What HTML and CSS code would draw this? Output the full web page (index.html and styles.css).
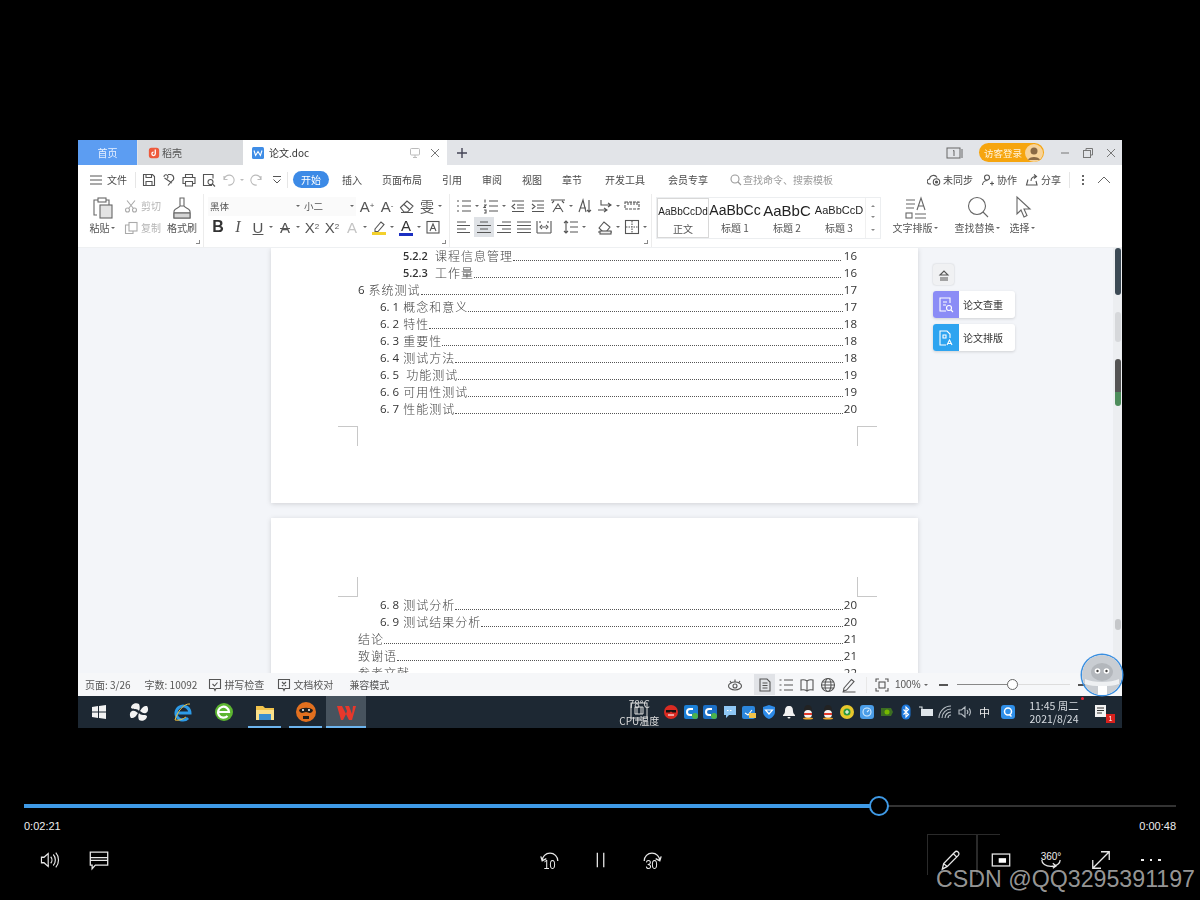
FILE: index.html
```html
<!DOCTYPE html>
<html lang="zh">
<head>
<meta charset="utf-8">
<title>论文.doc</title>
<link rel="stylesheet" href="styles.css">
</head>
<body>
<main class="stage">
  <section class="window">
    <header class="tabbar">
      <div class="tab tab-home">首页</div>
      <div class="tab tab-shell">
        <svg class="logo12" viewBox="0 0 14 14"><rect x="1" y="1" width="12" height="12" rx="3" fill="#ee5a3c"/><path d="M8.5 3v5a2 2 0 1 1-2-2" fill="none" stroke="#fff" stroke-width="1.5"/></svg>
        <span>稻壳</span>
      </div>
      <div class="tab tab-doc">
        <svg class="logo14" viewBox="0 0 14 14"><rect x="1" y="1" width="12" height="12" rx="1.5" fill="#3f8de6"/><path d="M3 4.5l1.6 5L7 5.5l2.4 4L11 4.500" fill="none" stroke="#fff" stroke-width="1.1"/></svg>
        <span class="doc-name">论文.doc</span>
        <svg class="wm12 monitor" viewBox="0 0 12 12"><rect x="1.500" y="1.500" width="9" height="6.500" rx="1"/><path d="M6 8v2.500M4 10.500h4"/></svg>
        <svg class="wm12" viewBox="0 0 12 12"><path d="M2 2l8 8M10 2l-8 8"/></svg>
      </div>
      <div class="tab-plus">
        <svg class="plus" viewBox="0 0 12 12"><path d="M6 1v10M1 6h10"/></svg>
      </div>
      <div class="tab-right">
        <svg class="book" viewBox="0 0 18 12"><rect x="1" y="1" width="13" height="10"/><path d="M7 4l1-.6V9M16 2v9"/></svg>
        <div class="login"><span>访客登录</span>
          <svg class="avatar" viewBox="0 0 18 18"><circle cx="9" cy="9" r="9" fill="#f7d39a"/><circle cx="9" cy="7" r="3.500" fill="#8a6a45"/><path d="M3 16c1-4 11-4 12 0z" fill="#8a6a45"/></svg>
        </div>
        <svg class="wm12 win" viewBox="0 0 12 12"><path d="M2 6h8"/></svg>
        <svg class="wm12 win" viewBox="0 0 12 12"><rect x="1.500" y="3.500" width="7" height="7"/><path d="M4 3.500V1.500h6.500V8H8.500"/></svg>
        <svg class="wm12 win" viewBox="0 0 12 12"><path d="M2 2l8 8M10 2l-8 8"/></svg>
      </div>
    </header>

    <nav class="menubar">
      <svg class="burger" viewBox="0 0 12 10"><path d="M0 1h12M0 5h12M0 9h12"/></svg>
      <span class="file-label">文件</span>
      <i class="menu-sep"></i>
      <div class="quick">
        <span class="tb"><svg class="ic" viewBox="0 0 20 20"><path d="M5 4.500h8.500l2 2V15.500H4.500V4.500zM7 4.500v3h5.500v-3M7 15.500v-4h6v4"/></svg></span>
        <span class="tb"><svg class="ic" viewBox="0 0 20 20"><path d="M5 7a2 2 0 1 1 3 1.500M5.500 8L13 13M11 4.500a3.500 3.500 0 0 1 2 6.500l-4 4.500M9 4.500h3"/></svg></span>
        <span class="tb"><svg class="ic" viewBox="0 0 20 20"><path d="M6.500 7.500V4.500h7v3M6.500 13.500H4v-6h12v6h-2.500M6.500 11.500h7v4.500h-7z"/></svg></span>
        <span class="tb"><svg class="ic" viewBox="0 0 20 20"><path d="M13 15.500H4.500v-11h9.500v4M9 12a2.500 2.500 0 1 0 5 0a2.500 2.500 0 0 0-5 0M13.500 14l2.500 2.500"/></svg></span>
        <span class="tb dim"><svg class="ic" viewBox="0 0 20 20"><path d="M5 6v3.500h3.500M5.200 9.300a5 5 0 1 1 4 5.700"/></svg></span><i class="caret dimc"></i>
        <span class="tb dim"><svg class="ic" viewBox="0 0 20 20"><path d="M15 6v3.500h-3.500M14.800 9.300a5 5 0 1 0-4 5.700"/></svg></span>
        <span class="tb small"><svg class="ic" viewBox="0 0 20 20"><path d="M6 6.500h8M6.500 9.500l3.500 3.500 3.500-3.500"/></svg></span>
      </div>
      <i class="menu-sep"></i>
      <div class="menu-tabs">
        <span class="pill">开始</span>
        <span>插入</span>
        <span>页面布局</span>
        <span>引用</span>
        <span>审阅</span>
        <span>视图</span>
        <span>章节</span>
        <span class="mt-wide">开发工具</span>
        <span class="mt-wide">会员专享</span>
      </div>
      <div class="search">
        <svg class="ic12" viewBox="0 0 12 12"><circle cx="5" cy="5" r="4"/><path d="M8 8l3 3"/></svg>
        <span>查找命令、搜索模板</span>
      </div>
      <div class="menu-right">
        <span class="mr-item"><svg class="ic14" viewBox="0 0 14 14"><path d="M4 11H3a2.500 2.500 0 0 1-.5-5A4 4 0 0 1 10 4.500"/><circle cx="9.500" cy="9" r="3.200"/><circle cx="9.500" cy="9" r="1" fill="#555"/></svg>未同步</span>
        <span class="mr-item"><svg class="ic14" viewBox="0 0 14 14"><circle cx="6" cy="4.500" r="2.500"/><path d="M1.500 12c0-3 2.500-4.500 5-4.500M9 10.500h4M11 8.500v4"/></svg>协作</span>
        <span class="mr-item"><svg class="ic14" viewBox="0 0 14 14"><path d="M3 6.500L1.500 12h10.500L11 8M6 8c0-3 2-4.500 5-4.500M9 1.500l2.500 2L9 5.500"/></svg>分享</span>
        <i class="menu-sep"></i>
        <span class="vdots"><i></i><i></i><i></i></span>
        <svg class="chev" viewBox="0 0 14 8"><path d="M1 7l6-6 6 6"/></svg>
      </div>
    </nav>

    <section class="ribbon">
      <div class="rg rg-clip">
        <div class="bigbtn paste">
          <svg class="ic26" viewBox="0 0 26 26"><path d="M7 20H4V5h4M16 5h3v5"/><rect x="8" y="3" width="8" height="4"/><rect x="10" y="10" width="12" height="13" fill="#e3e3e3"/></svg>
          <span class="lab">粘贴<i class="caret"></i></span>
        </div>
        <div class="cutcol">
          <span class="dimline"><svg class="ic14" viewBox="0 0 14 14"><circle cx="3.500" cy="11" r="2"/><circle cx="10.500" cy="11" r="2"/><path d="M4.500 9.500L11 1.500M9.500 9.500L3 1.500"/></svg><b>剪切</b></span>
          <span class="dimline"><svg class="ic14" viewBox="0 0 14 14"><rect x="5" y="1.500" width="8" height="8.500"/><path d="M5 4H1.500v8.500H9V10"/></svg><b>复制</b></span>
        </div>
        <div class="bigbtn brush">
          <svg class="ic26" viewBox="0 0 26 26"><path d="M11 3h4v8h-4zM11 11c-1 2-5 2-6 5v7h16v-7c-1-3-5-3-6-5M5 18h16"/><rect x="5" y="18" width="16" height="5" fill="#d5d5d5"/></svg>
          <span class="lab">格式刷</span>
        </div>
        <i class="launch"></i>
      </div>

      <div class="rg rg-font">
        <div class="rrow">
          <div class="select font-sel"><span>黑体</span><i class="caret"></i></div>
          <div class="select size-sel"><span>小二</span><i class="caret"></i></div>
          <span class="tb txt grow1">A<sup>+</sup></span>
          <span class="tb txt">A<sup>-</sup></span>
          <span class="tb"><svg class="ic" viewBox="0 0 20 20"><path d="M3.500 11.500l6.500-6.500 6 5-5.500 6H7zM6.500 8l6 5.500M4 16.500h12"/></svg></span>
          <span class="tb txt serifish">雯</span><i class="caret"></i>
        </div>
        <div class="rrow">
          <span class="tb txt bold">B</span>
          <span class="tb txt ital">I</span>
          <span class="tb txt under">U</span><i class="caret"></i>
          <span class="tb txt strike">A</span><i class="caret"></i>
          <span class="tb txt">X<sup>2</sup></span>
          <span class="tb txt">X<sub>2</sub></span>
          <span class="tb txt ghost">A</span><i class="caret"></i>
          <span class="tb"><svg class="ic" viewBox="0 0 20 20"><path d="M6 12l6-7 3 2.500-6 7H6z"/><rect x="3" y="15" width="14" height="3" fill="#f3d02c" stroke="none"/></svg></span><i class="caret"></i>
          <span class="tb txt fontcolor">A</span><i class="caret"></i>
          <span class="tb"><svg class="ic" viewBox="0 0 20 20"><rect x="4" y="4.500" width="12" height="11.500"/><path d="M7 14l3-7 3 7M8 11.500h4"/></svg></span>
        </div>
        <i class="launch"></i>
      </div>

      <div class="rg rg-para">
        <div class="rrow">
          <span class="tb"><svg class="ic" viewBox="0 0 20 20"><path d="M8 5h9M8 10h9M8 15h9M3 5h2M3 10h2M3 15h2"/></svg></span><i class="caret"></i>
          <span class="tb"><svg class="ic" viewBox="0 0 20 20"><path d="M8 5h9M8 10h9M8 15h9M4 3.500v3M3 9h2l-2 2.500h2M3 14h2v3H3"/></svg></span><i class="caret"></i>
          <span class="tb"><svg class="ic" viewBox="0 0 20 20"><path d="M4 5h12M9 9h7M9 12h7M4 15.500h12M7 8l-3 2.500L7 13"/></svg></span>
          <span class="tb"><svg class="ic" viewBox="0 0 20 20"><path d="M4 5h12M9 9h7M9 12h7M4 15.500h12M4 8l3 2.500L4 13"/></svg></span>
          <span class="tb"><svg class="ic" viewBox="0 0 20 20"><path d="M3 4h14M5 16l5-8 5 8M7 12.500h6M4 7l2-2M16 7l-2-2"/></svg></span><i class="caret"></i>
          <span class="tb"><svg class="ic" viewBox="0 0 20 20"><path d="M4 16l4-12 3 12M5 12h6M14 4v12M12 14l2 2 2-2"/></svg></span>
          <span class="tb"><svg class="ic" viewBox="0 0 20 20"><path d="M6 4v5h10M13 7l3 2-3 2M3 14h9M9 12l3 2-3 2"/></svg></span><i class="caret"></i>
          <span class="tb"><svg class="ic" viewBox="0 0 20 20"><path d="M3 6h14v7H3zM6 6v3M9 6v3M12 6v3M15 6v3" stroke-dasharray="3 1"/></svg></span>
        </div>
        <div class="rrow">
          <span class="tb"><svg class="ic" viewBox="0 0 20 20"><path d="M3 5h9M3 8.500h13M3 12h9M3 15.500h13"/></svg></span>
          <span class="tb on"><svg class="ic" viewBox="0 0 20 20"><path d="M6 5h8M3 8.500h14M6 12h8M3 15.500h14"/></svg></span>
          <span class="tb"><svg class="ic" viewBox="0 0 20 20"><path d="M8 5h9M3 8.500h14M8 12h9M3 15.500h14"/></svg></span>
          <span class="tb"><svg class="ic" viewBox="0 0 20 20"><path d="M3 5h14M3 8.500h14M3 12h14M3 15.500h14"/></svg></span>
          <span class="tb"><svg class="ic" viewBox="0 0 20 20"><path d="M3 16h14M3 4v12M17 4v12M6 4v2M14 4v2M8 10h4M8 8l-2 2 2 2M12 8l2 2-2 2"/></svg></span>
          <i class="gap-line"></i>
          <span class="tb"><svg class="ic" viewBox="0 0 20 20"><path d="M9 5h8M9 10h8M9 15h8M5 4v12M3 6l2-2 2 2M3 14l2 2 2-2"/></svg></span><i class="caret"></i>
          <i class="gap-line"></i>
          <span class="tb"><svg class="ic" viewBox="0 0 20 20"><path d="M4 11l5-6 6 5-4 5H8zM3 15h14"/><rect x="5" y="14" width="11" height="3" fill="#eee"/></svg></span><i class="caret"></i>
          <span class="tb"><svg class="ic" viewBox="0 0 20 20"><rect x="3.500" y="3.500" width="13" height="13"/><path d="M10 4v12M4 10h12" stroke-dasharray="1.500 1"/></svg></span><i class="caret"></i>
        </div>
        <i class="launch"></i>
      </div>

      <div class="gallery">
        <div class="style selected"><span class="pv pv-s">AaBbCcDd</span><span class="lab">正文</span></div>
        <div class="style"><span class="pv pv-h1">AaBbCc</span><span class="lab">标题 1</span></div>
        <div class="style"><span class="pv pv-h2">AaBbC</span><span class="lab">标题 2</span></div>
        <div class="style"><span class="pv pv-h3">AaBbCcD</span><span class="lab">标题 3</span></div>
        <div class="gal-scroll"><i class="up"></i><i class="down"></i><i class="more"></i></div>
      </div>

      <div class="bigbtn layout-btn">
        <svg class="ic26" viewBox="0 0 26 26"><path d="M3 5h9M3 9h9M3 13h8M14 15l4-12 4 12M15.500 11h5M12 19h11M12 23h11"/><rect x="3" y="18" width="6" height="5"/></svg>
        <span class="lab">文字排版<i class="caret"></i></span>
      </div>
      <div class="bigbtn find-btn">
        <svg class="ic26" viewBox="0 0 26 26"><circle cx="12" cy="11" r="8.500"/><path d="M18 17l5 5"/></svg>
        <span class="lab">查找替换<i class="caret"></i></span>
      </div>
      <div class="bigbtn select-btn">
        <svg class="ic26" viewBox="0 0 26 26"><path d="M7 2v17l4-4 3 7 3-1.500-3-6.500h6z"/></svg>
        <span class="lab">选择<i class="caret"></i></span>
      </div>
    </section>

    <section class="docarea">
      <div class="gutter"></div>
      <div class="pages">
        <article class="page page-one">
          <div class="toc l2"><span class="n b">5.2.2</span><span class="t wide">课程信息管理</span><i class="dots"></i><span class="n gapn">16</span></div>
          <div class="toc l2"><span class="n b">5.2.3</span><span class="t wide">工作量</span><i class="dots"></i><span class="n gapn">16</span></div>
          <div class="toc l0"><span class="n">6</span><span class="t">系统测试</span><i class="dots"></i><span class="n">17</span></div>
          <div class="toc l1"><span class="n">6. 1</span><span class="t">概念和意义</span><i class="dots"></i><span class="n">17</span></div>
          <div class="toc l1"><span class="n">6. 2</span><span class="t">特性</span><i class="dots"></i><span class="n">18</span></div>
          <div class="toc l1"><span class="n">6. 3</span><span class="t">重要性</span><i class="dots"></i><span class="n">18</span></div>
          <div class="toc l1"><span class="n">6. 4</span><span class="t">测试方法</span><i class="dots"></i><span class="n">18</span></div>
          <div class="toc l1"><span class="n">6. 5</span><span class="t wide">功能测试</span><i class="dots"></i><span class="n">19</span></div>
          <div class="toc l1"><span class="n">6. 6</span><span class="t">可用性测试</span><i class="dots"></i><span class="n">19</span></div>
          <div class="toc l1"><span class="n">6. 7</span><span class="t">性能测试</span><i class="dots"></i><span class="n">20</span></div>
          <div class="marks marks-bottom"><i class="mark ml"></i><i class="mark mr"></i></div>
        </article>
        <article class="page page-two">
          <div class="marks marks-top"><i class="mark ml"></i><i class="mark mr"></i></div>
          <div class="toc l1"><span class="n">6. 8</span><span class="t">测试分析</span><i class="dots"></i><span class="n">20</span></div>
          <div class="toc l1"><span class="n">6. 9</span><span class="t">测试结果分析</span><i class="dots"></i><span class="n">20</span></div>
          <div class="toc l0"><span class="t">结论</span><i class="dots"></i><span class="n">21</span></div>
          <div class="toc l0"><span class="t">致谢语</span><i class="dots"></i><span class="n">21</span></div>
          <div class="toc l0"><span class="t">参考文献</span><i class="dots"></i><span class="n">22</span></div>
        </article>
      </div>
      <aside class="sidepanel">
        <div class="collapse"><svg class="ic12" viewBox="0 0 12 12"><path d="M2 6l4-4 4 4zM2 9h8M2 11h8"/></svg></div>
        <div class="sidecard">
          <span class="sc-ico purple"><svg class="ic18" viewBox="0 0 18 18"><path d="M13 7V2H3v13h6M6 6h4M6 9h3"/><circle cx="12" cy="12" r="2.500"/><path d="M14 14l2 2"/></svg></span>
          <span>论文查重</span>
        </div>
        <div class="sidecard">
          <span class="sc-ico blue"><svg class="ic18" viewBox="0 0 18 18"><path d="M9 16H3V2h7l3 3v4M6 6h3v3H6z"/><path d="M10 16l2.500-5 2.500 5M11 14.500h3"/></svg></span>
          <span>论文排版</span>
        </div>
      </aside>
      <div class="scrollbar">
        <i class="sb-a"></i><i class="sb-b"></i><i class="sb-thumb"></i><i class="sb-btn"></i>
      </div>
    </section>

    <footer class="statusbar">
      <span class="st first">页面: 3/26</span>
      <span class="st">字数: 10092</span>
      <span class="st chk"><svg class="ic14" viewBox="0 0 14 14"><path d="M1.500 1.500h11v9H8l-1 2-1-2H1.500zM4.500 6l2 2 3-3.500"/></svg>拼写检查</span>
      <span class="st chk"><svg class="ic14" viewBox="0 0 14 14"><path d="M1.500 1.500h11v9H8l-1 2-1-2H1.500zM5 4l4 4M9 4L5 8"/></svg>文档校对</span>
      <span class="st">兼容模式</span>
      <div class="st-right">
        <span class="sv"><svg class="ic16" viewBox="0 0 16 16"><ellipse cx="8" cy="9" rx="6.500" ry="4"/><circle cx="8" cy="9" r="2"/><path d="M3 4l1.500 2M8 2.500V5M13 4l-1.500 2"/></svg></span>
        <i class="st-gap"></i>
        <span class="sv on"><svg class="ic16" viewBox="0 0 16 16"><path d="M3 2h7l3 3v9H3zM5.500 6h5M5.500 8.500h5M5.500 11h5"/></svg></span>
        <span class="sv"><svg class="ic16" viewBox="0 0 16 16"><path d="M1.500 3h2M6 3h9M1.500 8h2M6 8h9M1.500 13h2M6 13h9"/></svg></span>
        <span class="sv"><svg class="ic16" viewBox="0 0 16 16"><path d="M8 4C6 2.500 4 2.500 2 3v10c2-.5 4-.5 6 1 2-1.500 4-1.500 6-1V3c-2-.5-4-.5-6 1zM8 4v10"/></svg></span>
        <span class="sv"><svg class="ic16" viewBox="0 0 16 16"><circle cx="8" cy="8" r="6.500"/><ellipse cx="8" cy="8" rx="3" ry="6.500"/><path d="M1.500 8h13M2.500 5h11M2.500 11h11"/></svg></span>
        <span class="sv"><svg class="ic16" viewBox="0 0 16 16"><path d="M3 11l7.500-8.500 2.500 2L5.500 13 2.500 14zM1.500 15h13"/></svg></span>
        <i class="st-line"></i>
        <span class="sv"><svg class="ic16" viewBox="0 0 16 16"><path d="M2 5V2h3M11 2h3v3M14 11v3h-3M5 14H2v-3"/><rect x="5" y="5" width="6" height="6"/></svg></span>
        <span class="zoomv">100%<i class="caret"></i></span>
        <i class="minus"></i>
        <div class="slider"><i class="knob"></i></div>
        <i class="plusmark"></i>
      </div>
    </footer>

    <footer class="taskbar">
      <div class="apps">
        <span class="app"><svg class="ic16" viewBox="0 0 16 16"><path class="solid-w" d="M1 3l6-1v5.500H1zM8 2l7-1v6.500H8zM1 8.500h6V14l-6-1zM8 8.500h7V15l-7-1z"/></svg></span>
        <span class="app"><svg class="ic22" viewBox="0 0 22 22"><path class="solid-w" d="M11 10C9 7 6 9 3 7c0-4 5-6 8-4 1 2 1 5 0 7zM12 10c2-3 3-5 7-5 2 3 1 6-1 7-3 1-4-1-6-2zM11 12c2 3 6 1 8 3 0 4-5 6-8 4-1-2-1-5 0-7zM10 12c-2 3-3 5-7 5-2-3-1-6 1-7 3-1 4 1 6 2z"/></svg></span>
        <span class="app"><svg class="ic22" viewBox="0 0 22 22"><path d="M3 12h15a7 7 0 1 0-2 5" fill="none" stroke="#2d9be8" stroke-width="3"/><path d="M18 3c-6-1-13 8-15 16 4 1 8-1 11-3" fill="none" stroke="#f2c13c" stroke-width="1"/></svg></span>
        <span class="app"><svg class="ic22" viewBox="0 0 22 22"><circle cx="11" cy="11" r="9" fill="#5cb531"/><path d="M5 11h11a5.500 5.500 0 1 0-1.500 4" fill="none" stroke="#fff" stroke-width="2.200"/></svg></span>
        <span class="app run"><svg class="ic22" viewBox="0 0 22 22"><path d="M2 5h7l2 2h9v12H2z" fill="#f1c34c"/><path d="M2 9h18v10H2z" fill="#fbe08a"/><rect x="5" y="13" width="12" height="6" fill="#3a8ed0"/></svg></span>
        <span class="app run"><svg class="ic22" viewBox="0 0 22 22"><circle cx="11" cy="11" r="10" fill="#e2701f"/><path d="M4 9c3-3 11-3 14 0-1 4-4 3-7 2-3 1-6 2-7-2z" fill="#1d1d1d"/><circle cx="8" cy="9" r="1" fill="#fff"/><circle cx="14" cy="9" r="1" fill="#fff"/><path d="M8 15h6v3H8z" fill="#1d1d1d"/></svg></span>
        <span class="app active"><svg class="ic22" viewBox="0 0 22 22"><path d="M2 5h5l4 8 1-3-2-5h4l3 8 1-8h3l-4 14h-3l-3-6-3 6H6z" fill="#e8382b"/></svg></span>
      </div>
      <div class="tray">
        <div class="temp"><span class="tmp1">78°C</span><svg class="tmp-ic" viewBox="0 0 22 22"><rect x="3" y="2" width="16" height="15"/><path d="M7 6h8v7H7zM7 19h8M9 6v7M13 6v7"/></svg><span class="tmp2">CPU温度</span></div>
        <span class="ti"><svg class="ic16" viewBox="0 0 16 16"><circle cx="8" cy="8" r="7" fill="#d92b22"/><path d="M3 6h10v2.500H9.500L8 7.500 6.500 8.500H3z" fill="#111"/><path d="M5 11h6" stroke="#fff"/></svg></span>
        <span class="ti"><svg class="ic16" viewBox="0 0 16 16"><rect x="1" y="1" width="14" height="14" rx="2" fill="#1b7fd6"/><path d="M10 5H7a3 3 0 0 0 0 6h2" stroke="#fff" stroke-width="2" fill="none"/><circle cx="12" cy="12" r="3" fill="#4cb24c"/></svg></span>
        <span class="ti"><svg class="ic16" viewBox="0 0 16 16"><rect x="1" y="1" width="14" height="14" rx="2" fill="#1b6fc6"/><path d="M10 5H7a3 3 0 0 0 0 6h2" stroke="#fff" stroke-width="2" fill="none"/><circle cx="12" cy="12" r="3" fill="#4cb24c"/></svg></span>
        <span class="ti"><svg class="ic16" viewBox="0 0 16 16"><path d="M2 2h12v9H7l-3 3v-3H2z" fill="#8ec7f5"/><path d="M5 6.500h6" stroke="#fff" stroke-dasharray="1.500 1.500"/></svg></span>
        <span class="ti"><svg class="ic16" viewBox="0 0 16 16"><rect x="1" y="2" width="13" height="13" rx="2" fill="#2b86dd"/><path d="M4 9l3 2 4-5" stroke="#fff" fill="none"/><rect x="8" y="9" width="7" height="5" fill="#f0c24b"/></svg></span>
        <span class="ti"><svg class="ic16" viewBox="0 0 16 16"><path d="M8 1l6 2v5c0 3-3 6-6 7-3-1-6-4-6-7V3z" fill="#2c8ae8"/><path d="M4.500 6h7L8 10z" fill="none" stroke="#fff" stroke-width="1.200"/></svg></span>
        <span class="ti"><svg class="ic16" viewBox="0 0 16 16"><path class="solid-w" d="M8 2c3 0 4 2 4 5 0 2 1 3 2 4v1H2v-1c1-1 2-2 2-4 0-3 1-5 4-5zM6.500 13h3a1.500 1.500 0 0 1-3 0z"/></svg></span>
        <span class="ti"><svg class="ic16" viewBox="0 0 16 16"><ellipse cx="8" cy="6" rx="4" ry="5" fill="#222"/><ellipse cx="8" cy="10" rx="4" ry="4" fill="#f4f4f4"/><path d="M4 9h8v2H4z" fill="#e23b2c"/><ellipse cx="8" cy="14.500" rx="5" ry="1" fill="#f0a62b"/></svg></span>
        <span class="ti"><svg class="ic16" viewBox="0 0 16 16"><ellipse cx="8" cy="6" rx="4" ry="5" fill="#222"/><ellipse cx="8" cy="10" rx="4" ry="4" fill="#f4f4f4"/><path d="M4 9h8v2H4z" fill="#e23b2c"/><ellipse cx="8" cy="14.500" rx="5" ry="1" fill="#f0a62b"/></svg></span>
        <span class="ti"><svg class="ic16" viewBox="0 0 16 16"><circle cx="8" cy="8" r="7" fill="#e8c82c"/><circle cx="8" cy="8" r="3.500" fill="#2b9a3e"/><path d="M8 6v4M6 8h4" stroke="#fff"/></svg></span>
        <span class="ti"><svg class="ic16" viewBox="0 0 16 16"><rect x="1" y="1" width="14" height="14" rx="3" fill="#4a9de8"/><circle cx="8" cy="8" r="4" fill="none" stroke="#d5ecff"/><path d="M8 8l2-2" stroke="#d5ecff"/></svg></span>
        <span class="ti"><svg class="ic16" viewBox="0 0 16 16"><path d="M2 4h10l2 4-2 4H2z" fill="#3c6e22"/><circle cx="8" cy="8" r="2.500" fill="#76b900"/></svg></span>
        <span class="ti"><svg class="ic16" viewBox="0 0 16 16"><rect x="3.500" y="0.500" width="9" height="15" rx="4.500" fill="#1d78dc"/><path d="M5.500 5.500l5 5L8 13V3l2.500 2.500-5 5" fill="none" stroke="#fff"/></svg></span>
        <span class="ti"><svg class="ic16" viewBox="0 0 16 16"><rect x="3" y="5" width="12" height="7" fill="#dfe5ea"/><path d="M1 3h3v3" stroke="#dfe5ea" fill="none"/></svg></span>
        <span class="ti"><svg class="ic16 trayline" viewBox="0 0 16 16"><path d="M2 14a12 12 0 0 1 12-12M5 14a9 9 0 0 1 9-9M8 14a6 6 0 0 1 6-6M11 14a3 3 0 0 1 3-3"/></svg></span>
        <span class="ti"><svg class="ic16 trayline" viewBox="0 0 16 16"><path d="M2 6h2.500L8 3v10l-3.500-3H2zM10 6a3 3 0 0 1 0 4M12 4.500a5 5 0 0 1 0 7"/></svg></span>
        <span class="ti ime">中</span>
        <span class="ti qbox"><svg class="ic16" viewBox="0 0 16 16"><rect x="1" y="1" width="14" height="14" rx="3" fill="#2f8fe8"/><circle cx="8" cy="7.500" r="3.500" fill="none" stroke="#fff" stroke-width="1.500"/><path d="M9.500 10.500l2 2" stroke="#fff" stroke-width="1.500"/></svg></span>
        <div class="clock"><span>11:45 周二</span><span>2021/8/24</span><i class="reddot"></i></div>
        <span class="notif"><svg class="ic16" viewBox="0 0 16 16"><path class="solid-w" d="M2 1h11v12H2z"/><path d="M4 4h7M4 6.500h7M4 9h5" stroke="#333"/></svg><b>1</b></span>
      </div>
    </footer>
  </section>

  <div class="robot">
    <svg viewBox="0 0 40 40"><circle cx="20" cy="20" r="20" fill="#c9cdd2"/><ellipse cx="20" cy="17" rx="11" ry="9" fill="#b3b7bc"/><circle cx="15.500" cy="16" r="2.800" fill="#fff"/><circle cx="24.500" cy="16" r="2.800" fill="#fff"/><circle cx="15.500" cy="16" r="1.200" fill="#444"/><circle cx="24.500" cy="16" r="1.200" fill="#444"/><path d="M3 24c8 4 26 4 34 0v5c-8 3-26 3-34 0z" fill="#eef0f2"/><rect x="16" y="31" width="9" height="9" fill="#fff"/></svg>
  </div>

  <section class="player">
    <div class="progress">
      <div class="played"></div>
      <i class="handle"></i>
    </div>
    <div class="times"><span>0:02:21</span><span>0:00:48</span></div>
    <div class="controls">
      <div class="cgroup left">
        <span class="cb"><svg class="pi" viewBox="0 0 24 24"><path d="M3 9h3l5-4v14l-5-4H3zM14 8.500a5 5 0 0 1 0 7M17 6a8.500 8.500 0 0 1 0 12M20 4a11.500 11.500 0 0 1 0 16" transform="translate(1 0) scale(.92 1)"/></svg></span>
        <span class="cb"><svg class="pi" viewBox="0 0 24 24"><path d="M2.500 3.500h19v14H8L4.500 21.500v-4h-2zM3 9.500h18M3 12.500h18"/></svg></span>
      </div>
      <div class="cgroup mid">
        <span class="cb seek"><svg class="pi" viewBox="0 0 24 24"><path d="M3.500 13a8.500 8.500 0 0 1 17 0M2 8l1.500 5L8 10.500"/></svg><em>10</em></span>
        <span class="cb"><svg class="pi" viewBox="0 0 24 24"><path d="M8 4v16M15 4v16"/></svg></span>
        <span class="cb seek"><svg class="pi" viewBox="0 0 24 24"><path d="M3.500 13a8.500 8.500 0 0 1 17 0M22 8l-1.500 5L16 10.500"/></svg><em>30</em></span>
      </div>
      <div class="cgroup right">
        <span class="cb framed"><svg class="pi" viewBox="0 0 24 24"><path d="M2.500 22l1.500-6L16 3.500a2.500 2.500 0 0 1 4 3.500L8 19zM4 16l4 3M14.500 5l4 4"/></svg></span>
        <span class="cb framed2"><svg class="pi" viewBox="0 0 24 24"><rect x="2.500" y="5.500" width="19" height="13"/><rect x="9.500" y="10" width="8" height="5" fill="#fff" stroke="none"/></svg></span>
        <span class="cb deg"><em>360°</em><svg class="pi" viewBox="0 0 24 24"><path d="M2 12c0 4 4 7 10 7s10-3 10-7M14 15.500l3.500 3L14 21"/></svg></span>
        <span class="cb"><svg class="pi" viewBox="0 0 24 24"><path d="M3 21L21 3M12 3h9v9M3 12v9h9"/></svg></span>
        <span class="cb more3"><i></i><i></i><i></i></span>
      </div>
    </div>
  </section>

  <div class="watermark">CSDN @QQ3295391197</div>
</main>
</body>
</html>
```

FILE: styles.css
```css
* { box-sizing: border-box; }
html, body { margin: 0; padding: 0; background: #000; }
body {
  width: 1200px;
  height: 900px;
  overflow: hidden;
  font-family: "Noto Sans CJK SC", "Liberation Sans", sans-serif;
  font-size: 10px;
  color: #444;
}
svg { display: block; flex: none; }
i, em { font-style: normal; }
.stage { position: relative; width: 1200px; height: 900px; padding-top: 140px; }

/* window */
.window {
  width: 1044px;
  height: 588px;
  margin-left: 78px;
  display: flex;
  flex-direction: column;
  background: #fff;
  filter: blur(.35px);
}

/* icon sizes */
.ic, .ic12, .ic14, .ic16, .ic18, .ic22, .ic26 { fill: none; stroke: #555; stroke-width: 1.100; }
.ic { width: 20px; height: 20px; }
.ic12 { width: 12px; height: 12px; }
.ic14 { width: 14px; height: 14px; }
.ic16 { width: 16px; height: 16px; }
.ic18 { width: 18px; height: 18px; stroke: #fff; }
.ic22 { width: 22px; height: 22px; stroke: none; }
.ic26 { width: 26px; height: 26px; stroke: #666; }
.logo14 { width: 14px; height: 14px; }
.logo12 { width: 12px; height: 12px; }
.wm12 { width: 12px; height: 12px; fill: none; stroke: #777; stroke-width: 1; }
.solid-w { fill: #f2f2f2; stroke: none; }

.caret {
  display: inline-block;
  flex: none;
  width: 7px;
  height: 8px;
  position: relative;
}
.caret::after {
  content: "";
  position: absolute;
  left: 1px;
  top: 3px;
  border: 2px solid transparent;
  border-top: 2px solid #666;
}
.dimc::after { border-top-color: #bbb; }
.tb {
  flex: none;
  width: 20px;
  height: 20px;
  display: flex;
  align-items: center;
  justify-content: center;
}
.tb.on { background: #dfe2e6; }
.tb.dim .ic { stroke: #bbb; }
.tb.small { margin-left: 1px; }
.tb.small .ic { stroke-width: 1; }

/* tab bar */
.tabbar { flex: none; height: 25px; display: flex; background: #e2e4e8; }
.tab { display: flex; align-items: center; }
.tab-home {
  width: 59px;
  justify-content: center;
  background: #5c9df2;
  color: #eaf2ff;
}
.tab-shell {
  width: 105px;
  margin-left: 1px;
  padding-left: 10px;
  gap: 2px;
  background: #d9dbde;
  color: #555;
}
.tab-doc { width: 204px; padding-left: 8px; background: #fff; color: #333; font-size: 10px; gap: 8px; }
.doc-name { margin-left: -4px; flex: 1; }
.tab-doc .wm12:last-child { margin-right: 6px; }
.monitor { stroke: #bbb; }
.tab-plus { width: 30px; display: flex; align-items: center; justify-content: center; }
.plus { width: 12px; height: 12px; fill: none; stroke: #445; stroke-width: 1.400; }
.tab-right { margin-left: auto; display: flex; align-items: center; padding-right: 5px; }
.book { width: 18px; height: 12px; fill: none; stroke: #666; stroke-width: 1; margin-right: 15px; }
.login {
  width: 65px;
  height: 19px;
  padding-left: 5px;
  margin-right: 15px;
  display: flex;
  align-items: center;
  justify-content: space-between;
  border-radius: 10px;
  background: #f6a50e;
  color: #fff3dc;
  font-size: 9.500px;
}
.avatar { width: 18px; height: 18px; margin-right: 1px; }
.win { margin-right: 11px; }
.win:last-child { margin-right: 0; }

/* menu bar */
.menubar {
  flex: none;
  height: 29px;
  display: flex;
  align-items: center;
  padding-left: 12px;
  color: #4a4a4a;
  font-size: 10px;
}
.burger { width: 12px; height: 10px; fill: none; stroke: #555; stroke-width: 1; }
.file-label { margin-left: 5px; width: 20px; }
.menu-sep { flex: none; width: 1px; height: 16px; background: #e6e6e6; margin: 0 3px 0 8px; }
.quick + .menu-sep { margin-left: 0; }
.mr-item + .menu-sep { margin-left: 0; }
.quick { display: flex; align-items: center; }
.menu-tabs { display: flex; align-items: center; gap: 20px; margin-left: 2px; }
.pill {
  width: 36px;
  height: 17px;
  margin-right: -7px;
  border-radius: 9px;
  background: #3c8ae6;
  color: #fff;
  display: flex;
  align-items: center;
  justify-content: center;
}
.mt-wide { margin-left: 3px; }
.search { display: flex; align-items: center; gap: 1px; margin-left: 22px; color: #999; }
.search .ic12 { stroke: #999; }
.menu-right { margin-left: auto; display: flex; align-items: center; padding-right: 11px; }
.mr-item { display: flex; align-items: center; gap: 2px; margin-right: 8px; }
.vdots { display: flex; flex-direction: column; gap: 2px; margin: 0 13px 0 9px; }
.vdots i { width: 2px; height: 2px; background: #666; }
.chev { width: 14px; height: 8px; fill: none; stroke: #666; stroke-width: 1; }

/* ribbon */
.ribbon {
  flex: none;
  height: 54px;
  display: flex;
  padding-left: 10px;
  border-bottom: 1px solid #eef0f2;
  color: #555;
}
.rg { position: relative; border-right: 1px solid #ececec; }
.launch {
  position: absolute;
  right: 3px;
  bottom: 3px;
  width: 4px;
  height: 4px;
  border-right: 1px solid #888;
  border-bottom: 1px solid #888;
}
.rg-clip { width: 116px; display: flex; }
.bigbtn { flex: none; display: flex; flex-direction: column; align-items: center; padding-top: 1px; }
.lab { display: flex; align-items: center; height: 15px; font-size: 10px; line-height: 15px; }
.bigbtn .lab { margin-top: -1px; }
.style .lab { margin-top: -3px; }
.paste { width: 30px; }
.cutcol { width: 48px; padding: 4px 0 0 6px; display: flex; flex-direction: column; gap: 7px; }
.dimline { display: flex; align-items: center; gap: 3px; }
.dimline b { font-weight: 400; color: #b5b5b5; }
.dimline .ic14 { stroke: #aaa; }
.brush { width: 32px; }

.rg-font { width: 246px; padding: 2px 0 0 4px; }
.rrow { display: flex; align-items: center; height: 20px; margin-bottom: 1px; }
.select { height: 19px; display: flex; align-items: center; background: #fafafa; font-size: 9.500px; }
.font-sel { width: 94px; padding-left: 2px; justify-content: space-between; }
.size-sel { width: 54px; padding-left: 2px; justify-content: space-between; }
.txt { font: 15px "Liberation Sans", sans-serif; color: #555; }
.txt sup, .txt sub { font-size: 8px; line-height: 0; }
.grow1 { margin-left: 1px; }
.serifish { font: 14px "Noto Sans CJK SC", sans-serif; }
.bold { font-weight: 700; color: #333; font-size: 16px; }
.ital { font-style: italic; font-family: "Liberation Serif", serif; font-size: 16px; }
.under { text-decoration: underline; }
.strike { text-decoration: line-through; }
.ghost { color: #c4c4c4; }
.fontcolor { color: #333; border-bottom: 3px solid #1b2fc2; height: 18px; width: 14px; margin: 0 3px; line-height: 15px; }

.rg-para { width: 202px; padding: 2px 0 0 4px; }
.gap-line { flex: none; width: 7px; height: 16px; }

.gallery {
  flex: none;
  width: 225px;
  height: 42px;
  margin: 3px 0 0 4px;
  display: flex;
  border: 1px solid #eceef0;
}
.style { width: 52px; display: flex; flex-direction: column; align-items: center; overflow: hidden; color: #555; }
.style.selected { border: 1.500px solid #d8d8d8; }
.pv { height: 25px; line-height: 25px; font-family: "Liberation Sans", sans-serif; color: #222; white-space: nowrap; }
.pv-s { font-size: 10px; }
.pv-h1 { font-size: 14px; }
.pv-h2 { font-size: 15px; }
.pv-h3 { font-size: 11px; }
.gal-scroll { flex: 1; display: flex; flex-direction: column; align-items: center; justify-content: space-around; border-left: 1px solid #f0f0f0; }
.gal-scroll i { width: 0; height: 0; border: 2.500px solid transparent; }
.gal-scroll .up { border-bottom-color: #888; }
.gal-scroll .down, .gal-scroll .more { border-top-color: #888; }

.layout-btn { width: 56px; margin-left: 7px; }
.find-btn { width: 56px; margin-left: 6px; }
.select-btn { width: 34px; }

/* document area */
.docarea { flex: none; height: 425px; display: flex; overflow: hidden; background: #f3f5f9; }
.gutter { flex: none; width: 193px; }
.pages { flex: none; width: 647px; display: flex; flex-direction: column; gap: 15px; }
.page {
  flex: none;
  background: #fff;
  box-shadow: 0 1px 5px rgba(0,0,0,.15);
  padding: 0 61px 0 67px;
  color: #333;
}
.page-one { height: 255px; }
.page-two { height: 400px; }
.toc { height: 17px; padding-bottom: 2px; display: flex; align-items: center; font-size: 12px; line-height: 15px; }
.l0 { padding-left: 20px; }
.l1 { padding-left: 42px; }
.l2 { padding-left: 65px; }
.n { font-family: "Open Sans", sans-serif; font-size: 11.500px; }
.n.b { font-weight: 600; font-size: 11px; }
.gapn { margin-left: 2px; }
.t { margin-left: 4px; letter-spacing: 1px; color: #444; font-weight: 300; }
.t.wide { margin-left: 7px; }
.l0 .t:first-child { margin-left: 0; }
.dots { flex: 1; height: 10px; margin: 0 1px 0 0; border-bottom: 1px dotted #555; }
.marks { display: flex; justify-content: space-between; width: 539px; }
.mark { display: block; width: 20px; height: 20px; }
.marks-bottom { padding-top: 8px; }
.marks-bottom .ml { border-top: 1px solid #c8c8c8; border-right: 1px solid #c8c8c8; }
.marks-bottom .mr { border-top: 1px solid #c8c8c8; border-left: 1px solid #c8c8c8; }
.marks-top { padding-top: 59px; }
.marks-top .ml { border-bottom: 1px solid #c8c8c8; border-right: 1px solid #c8c8c8; }
.marks-top .mr { border-bottom: 1px solid #c8c8c8; border-left: 1px solid #c8c8c8; }

.sidepanel { flex: 1; padding: 16px 0 0 15px; }
.collapse {
  width: 21px;
  height: 21px;
  display: flex;
  align-items: center;
  justify-content: center;
  background: #f0f1f3;
  border-radius: 3px;
  box-shadow: 0 0 2px rgba(0,0,0,.2);
}
.sidecard {
  width: 82px;
  height: 27px;
  margin-top: 6px;
  display: flex;
  align-items: center;
  gap: 4px;
  background: #fff;
  border-radius: 3px;
  box-shadow: 0 1px 3px rgba(0,0,0,.15);
  color: #333;
}
.sc-ico { width: 26px; height: 27px; display: flex; align-items: center; justify-content: center; border-radius: 3px 0 0 3px; }
.purple { background: #8b8cf6; }
.blue { background: #2ea4f0; }
.scrollbar { flex: none; width: 9px; display: flex; flex-direction: column; align-items: center; background: #eceef1; }
.scrollbar i { display: block; width: 6px; border-radius: 3px; }
.sb-a { height: 47px; background: #3c4a55; }
.sb-b { height: 30px; margin-top: 17px; background: #d6d8db; }
.sb-thumb { height: 47px; margin-top: 17px; background: linear-gradient(#555 70%, #4e8d5c 70%); }
.sb-btn { height: 11px; margin-top: 213px; background: #c5c7ca; }

/* status bar */
.statusbar {
  flex: none;
  height: 23px;
  display: flex;
  align-items: center;
  padding-left: 7px;
  background: #f6f7f9;
  color: #555;
}
.st { margin-right: 14px; }
.chk { display: flex; align-items: center; gap: 2px; margin-left: -3px; margin-right: 16px; }
.st-right { margin-left: auto; display: flex; align-items: center; padding-right: 35px; }
.sv { width: 21px; height: 21px; display: flex; align-items: center; justify-content: center; }
.sv.on { background: #e1e3e7; }
.st-gap { width: 9px; }
.st-line { width: 1px; height: 16px; margin: 0 4px 0 7px; background: #e8e8e8; }
.zoomv { display: flex; align-items: center; gap: 2px; width: 36px; font: 10px "Liberation Sans", sans-serif; margin-left: 3px; }
.minus { width: 9px; height: 2px; margin-left: 8px; background: #555; }
.slider { position: relative; width: 113px; height: 1px; margin: 0 8px 0 9px; background: linear-gradient(90deg, #888 50%, #ddd 50%); }
.knob { position: absolute; left: 50px; top: -5px; width: 11px; height: 11px; border-radius: 50%; background: #fff; border: 1px solid #666; }
.plusmark { width: 9px; height: 2px; background: #555; }

/* taskbar */
.taskbar {
  flex: none;
  height: 32px;
  display: flex;
  justify-content: space-between;
  background: #1d2833;
  color: #e6e6e6;
}
.apps { display: flex; }
.app { width: 41px; height: 32px; display: flex; align-items: center; justify-content: center; }
.app:nth-child(2) { margin-left: -1px; }
.app:nth-child(3) { margin-left: 3px; }
.run { background: linear-gradient(#6cb4ee, #6cb4ee) center bottom / 33px 2px no-repeat; }
.active { width: 40px; background: #47535e; box-shadow: inset 0 -2px 0 #6cb4ee; }
.tray { display: flex; align-items: center; padding-right: 9px; }
.temp { width: 44px; display: grid; justify-items: center; font-size: 10px; line-height: 11px; color: #ddd; }
.temp > * { grid-area: 1 / 1; }
.tmp1 { align-self: start; margin-top: -3px; }
.tmp2 { align-self: end; margin-top: 14px; margin-bottom: -2px; white-space: nowrap; }
.tmp-ic { width: 22px; height: 22px; fill: none; stroke: #ddd; }
.ti { width: 19.600px; display: flex; justify-content: center; }
.ti .ic16 { stroke: none; }
.trayline.ic16 { stroke: #b9c0c6; }
.ime { font-size: 11px; color: #eee; }
.qbox { margin-left: 4px; }
.clock {
  position: relative;
  width: 70px;
  margin-left: 1px;
  display: flex;
  flex-direction: column;
  align-items: center;
  font: 10.500px/13px "Noto Sans CJK SC", sans-serif;
  color: #d8dde2;
}
.reddot { position: absolute; top: -2px; right: 5px; width: 3px; height: 3px; border-radius: 50%; background: #e23; }
.notif { position: relative; width: 20px; margin-left: 4px; }
.notif b { position: absolute; right: -2px; bottom: -3px; width: 9px; height: 9px; background: #d8201c; color: #fff; font: 7px/9px "Liberation Sans", sans-serif; text-align: center; }

.robot { position: absolute; left: 1082px; top: 655px; width: 40px; height: 40px; border-radius: 50%; box-shadow: 0 0 0 1.500px #3a8fe0; overflow: hidden; filter: blur(.3px); }

/* player */
.player { margin-top: 76px; color: #fff; }
.progress { position: relative; height: 4px; margin: 0 24px; background: linear-gradient(#333, #333) center / 100% 2px no-repeat; }
.played { width: 855px; height: 4px; background: #3f9ae6; }
.handle { position: absolute; left: 845px; top: -8px; width: 20px; height: 20px; border-radius: 50%; background: #000; border: 2px solid #3f9ae6; }
.times {
  display: flex;
  justify-content: space-between;
  padding: 0 24px;
  margin-top: 11px;
  font: 11px/15px "Liberation Sans", sans-serif;
  color: #eee;
}
.controls { display: flex; margin-top: 14px; padding-left: 24px; }
.cgroup { display: flex; flex: none; }
.mid { margin-left: 400px; }
.right { margin-left: 249px; }
.mid .cb { width: 51px; }
.cb { position: relative; width: 50px; height: 24px; display: flex; align-items: center; justify-content: center; }
.pi { width: 22px; height: 22px; fill: none; stroke: #e8e8e8; stroke-width: 1.400; }
.seek em, .deg em { position: absolute; left: 0; right: 0; text-align: center; font: 12px/12px "Liberation Sans", sans-serif; color: #eee; }
.seek em { top: 11px; transform: scaleX(.9); }
.deg em { top: 3px; font-size: 10px; }
.framed::before, .framed2::before {
  content: "";
  position: absolute;
  left: 1px;
  top: -14px;
  width: 48px;
  height: 40px;
  border: 1px solid #2a2a2a;
  border-bottom: 0;
}
.framed2::before { width: 22px; border-right: 0; }
.more3 { gap: 6px; }
.more3 i { width: 2.500px; height: 2.500px; background: #eee; }

.watermark {
  position: absolute;
  left: 936px;
  top: 865px;
  font: 23.200px/28px "Liberation Sans", sans-serif;
  color: rgba(170,170,170,.9);
  white-space: nowrap;
}
```
